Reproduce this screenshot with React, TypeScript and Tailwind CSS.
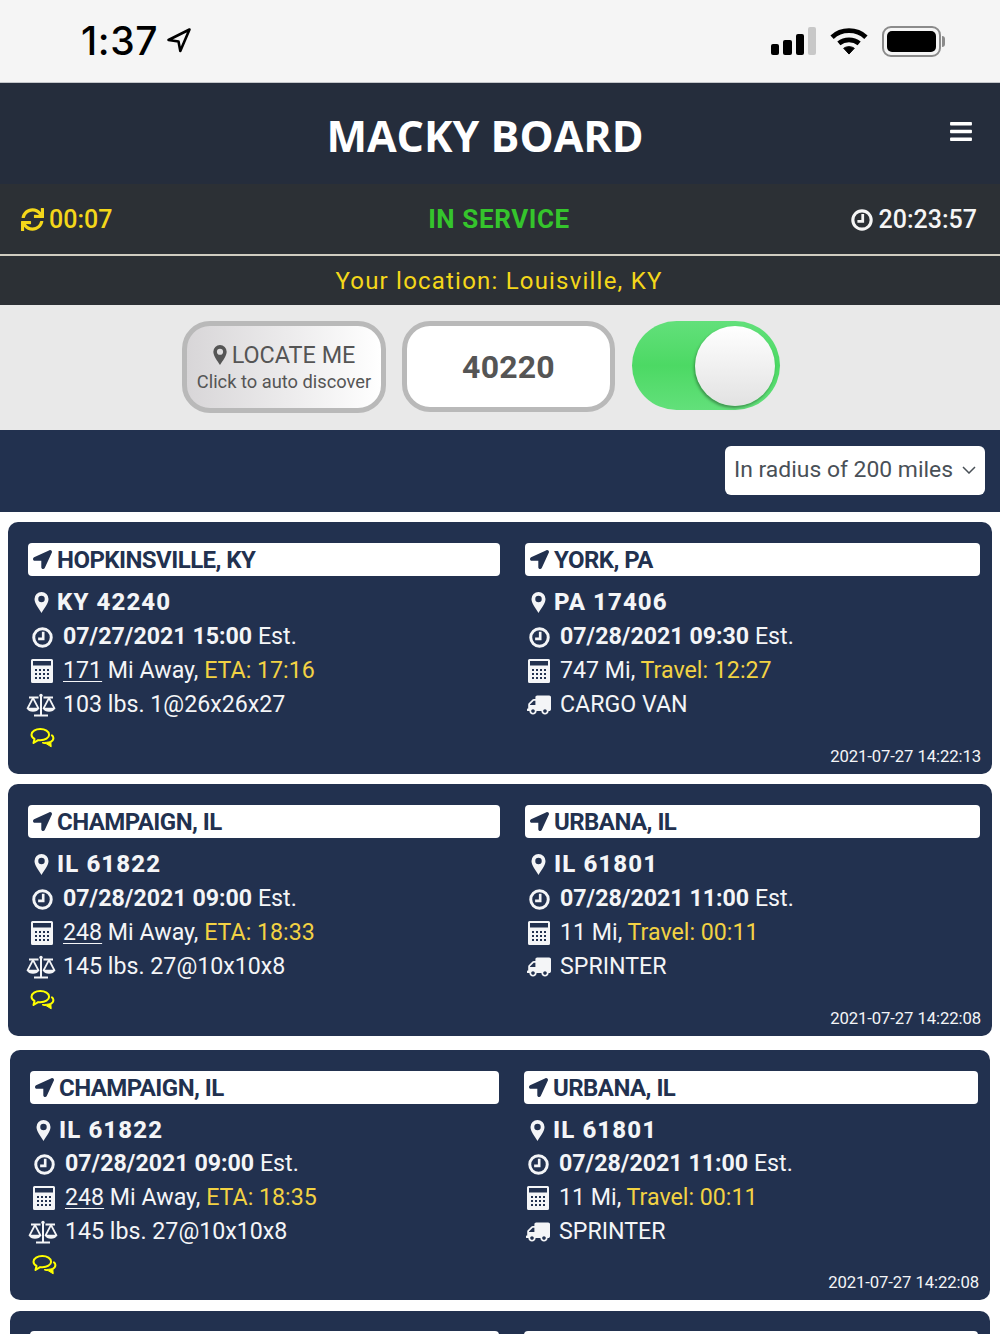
import React from 'react';
import { FaLocationArrow, FaSync, FaTruck, FaBars } from 'react-icons/fa';

const Pin = ({ className }: { className?: string }) => (
  <svg viewBox="0 0 16 24" className={className} fill="currentColor">
    <path fillRule="evenodd" d="M8 0a8 8 0 0 1 8 8c0 5-5 11-8 16C5 19 0 13 0 8a8 8 0 0 1 8-8zm0 4.400a3.700 3.700 0 1 0 0 7.400 3.700 3.700 0 0 0 0-7.400z" />
  </svg>
);

const Clock = ({ className }: { className?: string }) => (
  <svg viewBox="0 0 24 24" className={className} fill="none" stroke="currentColor">
    <circle cx="12" cy="12" r="10" strokeWidth="3.400" />
    <path d="M12.800 5.500v8H7" strokeWidth="3" />
  </svg>
);

const Calc = ({ className }: { className?: string }) => (
  <svg viewBox="0 0 22 24" className={className} fill="currentColor">
    <path
      fillRule="evenodd"
      d="M1.500 0h19A1.500 1.500 0 0 1 22 1.500v21a1.500 1.500 0 0 1-1.500 1.500h-19A1.500 1.500 0 0 1 0 22.500v-21A1.500 1.500 0 0 1 1.500 0zM2 2v4.500h18V2zM4 10v2h2v-2zm4 0v2h2v-2zm4 0v2h2v-2zm4 0v2h2v-2zM4 14v2h2v-2zm4 0v2h2v-2zm4 0v2h2v-2zm4 0v2h2v-2zM4 18v2h2v-2zm4 0v2h2v-2zm4 0v2h2v-2zm4 0v2h2v-2z"
    />
  </svg>
);

const Scales = ({ className }: { className?: string }) => (
  <svg viewBox="0 0 30 24" className={className} fill="none" stroke="currentColor" strokeWidth="1.700" strokeLinejoin="round">
    <circle cx="15" cy="2.500" r="1.700" fill="currentColor" stroke="none" />
    <path d="M15 3v18.500M8 22.500h14M3 4.500h9.500M17.500 4.500H27" strokeWidth="2" />
    <path d="M7 5 1.500 15.500h11zM23 5l-5.500 10.500h11z" />
    <path d="M1.200 15.500h11.600c-.6 2.200-3 3.300-5.800 3.300s-5.200-1.100-5.800-3.300zM17.200 15.500h11.600c-.6 2.200-3 3.300-5.800 3.300s-5.200-1.100-5.800-3.300z" fill="currentColor" stroke="none" />
  </svg>
);

const Chat = ({ className }: { className?: string }) => (
  <svg viewBox="0 0 24 20" className={className} fill="none" stroke="currentColor" strokeWidth="2" strokeLinejoin="round">
    <path d="M9.800 1.100c4.800 0 8.800 2.400 8.800 5.600s-4 5.600-8.800 5.600c-.8 0-1.500 0-2.200-.2L3 15l1-4.100C2.200 9.900 1 8.400 1 6.700c0-3.200 4-5.600 8.800-5.600z" />
    <path d="M20.800 6.800c1.300.8 2.100 2 2.100 3.300 0 1.600-1 3-2.700 3.800" />
    <path d="M20.300 13.500l.4 5.300-5.200-3.200c-1.500 0-2.800-.3-3.900-.9 3.200-.2 6.400-.6 8.700-1.200z" fill="currentColor" strokeWidth="1" />
  </svg>
);

type Stop = {
  city: string;
  zip: string;
  date: string;
  dist: string;
  underline?: boolean;
  rest: string;
  time: string;
};

type Load = {
  from: Stop;
  to: Stop;
  weight: string;
  vehicle: string;
  stamp: string;
};

const Row = ({ icon, children }: { icon: React.ReactNode; children: React.ReactNode }) => (
  <div className="flex h-[34px] items-center whitespace-nowrap">
    <span className="flex w-[35px] shrink-0 justify-center pr-[7px]">{icon}</span>
    <span>{children}</span>
  </div>
);

const Column = ({ stop, alt, children }: { stop: Stop; alt?: boolean; children: React.ReactNode }) => (
  <>
    <div className="flex h-[33px] items-center gap-[5px] rounded-[4px] bg-white pl-[5px] text-[24px] leading-none font-bold tracking-[-0.55px] text-[#22314f]">
      <FaLocationArrow className="h-[19px] w-[19px] shrink-0" />
      {stop.city}
    </div>
    <div className="mt-[9px]">
      <div className="flex h-[34px] items-center whitespace-nowrap pl-[6px] text-[24px] font-extrabold tracking-[1.1px]">
        <Pin className="mr-[8px] h-[21px] w-[15px] shrink-0" />
        {stop.zip}
      </div>
      <div className={alt ? '' : 'mt-px'}>
        <Row icon={<Clock className="h-[21px] w-[21px]" />}>
          <b className="font-bold">{stop.date}</b> Est.
        </Row>
        <Row icon={<Calc className="h-[24px] w-[22px]" />}>
          <span className={stop.underline ? 'underline underline-offset-3 decoration-1' : ''}>{stop.dist}</span>
          {stop.rest}
          <span className="text-[#f2d243]">{stop.time}</span>
        </Row>
        {children}
      </div>
    </div>
  </>
);

const Card = ({ load, alt }: { load: Load; alt?: boolean }) => (
  <div
    className={
      alt
        ? 'mx-[10px] mt-[14px] grid h-[250px] grid-cols-[469px_454px] gap-x-[25px] rounded-[10px] bg-[#22314f] pt-[21px] pr-[12px] pb-[8px] pl-[20px] text-[23.2px] leading-none text-[#f4f5f7]'
        : 'mx-[8px] mt-[10px] grid h-[252px] grid-cols-[472px_455px] gap-x-[25px] rounded-[10px] bg-[#22314f] pt-[21px] pr-[12px] pb-[8px] pl-[20px] text-[23.2px] leading-none text-[#f4f5f7]'
    }
  >
    <div>
      <Column stop={load.from} alt={alt}>
        <Row icon={<Scales className="-ml-[2px] h-[24px] w-[30px] shrink-0" />}>{load.weight}</Row>
        <div className="-mt-px flex h-[34px] items-center pl-[2px] text-[#ffff00]">
          <Chat className="h-[20px] w-[25px]" />
        </div>
      </Column>
    </div>
    <div className="flex flex-col">
      <Column stop={load.to} alt={alt}>
        <Row icon={<FaTruck className="h-[20px] w-[24px] -scale-x-100" />}>{load.vehicle}</Row>
      </Column>
      <div className="mt-auto -mr-px h-[18px] text-right text-[16.7px] leading-[18px] tracking-[-0.1px]">{load.stamp}</div>
    </div>
  </div>
);

const first: Load = {
  from: { city: 'HOPKINSVILLE, KY', zip: 'KY 42240', date: '07/27/2021 15:00', dist: '171', underline: true, rest: ' Mi Away, ', time: 'ETA: 17:16' },
  to: { city: 'YORK, PA', zip: 'PA 17406', date: '07/28/2021 09:30', dist: '747', rest: ' Mi, ', time: 'Travel: 12:27' },
  weight: '103 lbs. 1@26x26x27',
  vehicle: 'CARGO VAN',
  stamp: '2021-07-27 14:22:13',
};

const second: Load = {
  from: { city: 'CHAMPAIGN, IL', zip: 'IL 61822', date: '07/28/2021 09:00', dist: '248', underline: true, rest: ' Mi Away, ', time: 'ETA: 18:33' },
  to: { city: 'URBANA, IL', zip: 'IL 61801', date: '07/28/2021 11:00', dist: '11', rest: ' Mi, ', time: 'Travel: 00:11' },
  weight: '145 lbs. 27@10x10x8',
  vehicle: 'SPRINTER',
  stamp: '2021-07-27 14:22:08',
};

const third: Load = {
  ...second,
  from: { ...second.from, time: 'ETA: 18:35' },
};

export default function App() {
  return (
    <div className="h-[1334px] overflow-hidden bg-white font-['Roboto',sans-serif]">
      {/* phone status bar */}
      <div className="flex h-[83px] items-center justify-between border-b border-[#c4c6ca] bg-[#f5f5f5] pr-[55px] pl-[81px] text-black">
        <div className="flex items-center gap-[8px] pb-[2px] font-['Inter',sans-serif] text-[39px] leading-none font-medium tracking-[0.6px]">
          1:37
          <svg viewBox="0 0 26 26" className="h-[27px] w-[26px]" fill="none" stroke="currentColor" strokeWidth="2.600" strokeLinejoin="round">
            <path d="M23.500 2 2.500 12.500l10 1.500 1.800 9.500z" />
          </svg>
        </div>
        <div className="flex items-center gap-[13px]">
          <div className="flex items-end gap-[4px]">
            <span className="h-[11px] w-[8px] rounded-[2px] bg-black" />
            <span className="h-[15px] w-[9px] rounded-[2px] bg-black" />
            <span className="h-[21px] w-[8px] rounded-[2px] bg-black" />
            <span className="h-[28px] w-[8px] rounded-[2px] bg-[#c8c8c8]" />
          </div>
          <svg viewBox="0 0 40 30" className="h-[29px] w-[40px]" fill="none" stroke="black" strokeWidth="5">
            <path d="M2.500 10.500C12 1.500 28 1.500 37.500 10.500" />
            <path d="M9.500 17c6-5 15-5 21 0" />
            <path d="M14.500 22l5.500 6 5.500-6c-3-2.200-8-2.200-11 0z" fill="black" strokeWidth="1" />
          </svg>
          <div className="flex items-center">
            <div className="h-[31px] w-[59px] rounded-[9px] border-2 border-[#8b8b8b] p-[3px]">
              <div className="h-full w-full rounded-[5px] bg-black" />
            </div>
            <span className="ml-[1px] h-[11px] w-[3px] rounded-r-full bg-[#8b8b8b]" />
          </div>
        </div>
      </div>

      {/* title */}
      <div className="relative flex h-[101px] items-center justify-center bg-[#252d3c] pt-[3px] pr-[30px]">
        <h1 className="font-['Open_Sans',sans-serif] text-[43px] leading-none font-bold tracking-[0px] text-white">MACKY BOARD</h1>
        <FaBars className="absolute top-[36px] right-[26px] h-[25px] w-[26px] text-white" />
      </div>

      {/* service bar */}
      <div className="flex h-[70px] items-center bg-[#2c3035] pr-[23px] pl-[21px] text-[25px] font-medium">
        <div className="flex flex-1 items-center gap-[5px] pt-px text-[#f4d71a]">
          <FaSync className="h-[23px] w-[23px]" />
          00:07
        </div>
        <div className="text-[26px] font-bold tracking-[0.6px] text-[#35c42c]">IN SERVICE</div>
        <div className="flex flex-1 items-center justify-end gap-[6px] pt-px text-[#f5f5f5]">
          <Clock className="h-[22px] w-[22px]" />
          20:23:57
        </div>
      </div>
      <div className="h-[2px] bg-[#cfccc0]" />
      <div className="flex h-[49px] items-center justify-center bg-[#2c3035] pr-[2px] text-[24px] tracking-[1.2px] text-[#f4d71a]">
        Your location: Louisville, KY
      </div>

      {/* locate controls */}
      <div className="flex h-[125px] items-center gap-[16px] bg-[#e9e9e9] pb-[2px] pl-[182px]">
        <div className="flex h-[92px] w-[204px] flex-col items-center justify-center rounded-[28px] border-[5px] border-[#b9b9b9] bg-gradient-to-r from-[#d8d6d8] to-white text-[#555555]">
          <div className="flex items-center gap-[5px] text-[23.4px] leading-[30px]">
            <Pin className="h-[20px] w-[14px]" />
            LOCATE ME
          </div>
          <div className="text-[18.3px] leading-[24px] whitespace-nowrap">Click to auto discover</div>
        </div>
        <div className="flex h-[91px] w-[213px] items-center justify-center rounded-[28px] border-[5px] border-[#b9b9b9] bg-white text-[32px] font-bold tracking-[0.2px] text-[#555555]">
          40220
        </div>
        <div className="-mt-[2px] ml-[1px] flex h-[89px] w-[148px] items-center justify-end rounded-[45px] bg-gradient-to-b from-[#62e07a] via-[#4cd964] to-[#62e07a] pr-[5px]">
          <div className="h-[80px] w-[80px] rounded-full bg-gradient-to-b from-white to-[#e2e2e2] shadow-[-1px_2px_3px_rgba(0,0,0,0.35)]" />
        </div>
      </div>

      {/* radius filter */}
      <div className="flex h-[82px] items-center justify-end bg-[#22314f] pr-[15px] pb-[2px]">
        <div className="flex h-[49px] w-[260px] items-center justify-between rounded-[6px] bg-white pr-[9px] pl-[9px] text-[22.9px] whitespace-nowrap text-[#495057]">
          In radius of 200 miles
          <svg viewBox="0 0 14 8" className="h-[8px] w-[14px]" fill="none" stroke="currentColor" strokeWidth="1.500">
            <path d="M1 1l6 6 6-6" />
          </svg>
        </div>
      </div>

      <Card load={first} />
      <Card load={second} />
      <Card load={third} alt />

      <div className="mx-[10px] mt-[11px] h-[60px] rounded-[10px] bg-[#22314f] pt-[20px] pr-[12px] pl-[20px]">
        <div className="grid grid-cols-[469px_454px] gap-x-[25px]">
          <div className="h-[33px] rounded-[4px] bg-white" />
          <div className="h-[33px] rounded-[4px] bg-white" />
        </div>
      </div>
    </div>
  );
}
